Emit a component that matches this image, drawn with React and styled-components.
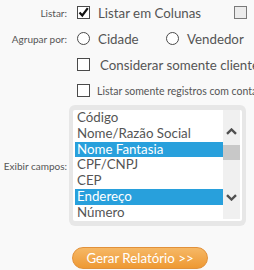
import React from "react";
import styled, {createGlobalStyle} from "styled-components";

const Global = createGlobalStyle`
  body {
    margin: 0;
    background: #f9f9f9;
    font-family: Lato, "Open Sans", sans-serif;
    color: #555;
  }
`

const Form = styled.div`
  display: grid;
  grid-template-columns: 69px 185px;
  width: 254px;
  height: 270px;
  overflow: hidden;
`

const Label = styled.div`
  font-size: 10px;
  text-align: right;
  padding-right: 2px;
  align-self: center;
  white-space: nowrap;
`

const Row = styled.div`
  display: flex;
  align-items: center;
  height: 25px;
  padding-left: 8px;
  white-space: nowrap;
`

const Option = styled.label`
  display: flex;
  align-items: center;
  gap: ${p => p.$gap || 8}px;
  flex: none;
  width: ${p => p.$w ? `${p.$w}px` : 'auto'};
  font-size: ${p => p.$small ? 10.5 : 13.3}px;
  color: #555;
`

const Box = styled.span`
  display: flex;
  align-items: center;
  justify-content: center;
  flex: none;
  width: 13px;
  height: 13px;
  box-sizing: border-box;
  border: 1px solid ${p => p.$disabled ? '#7a7a7a' : '#4a4a4a'};
  border-radius: ${p => p.$round ? '50%' : '0'};
  background: ${p => p.$disabled ? '#ececec' : '#fff'};
`

const Frame = styled.div`
  grid-column: 2;
  margin-top: 1px;
  width: 177px;
  height: 121px;
  box-sizing: border-box;
  padding: 5px 4px;
  background: #e7e7e7;
  border-radius: 6px;
`

const List = styled.div`
  display: flex;
  height: 111px;
  padding: 0 2px;
  background: #fff;
  border-radius: 2px;
`

const Items = styled.div`
  flex: 1;
  overflow: hidden;
`

const Item = styled.div`
  height: 15.75px;
  line-height: 15.75px;
  padding-left: 2px;
  font-size: 13.3px;
  white-space: nowrap;
  color: ${p => p.$selected ? '#fff' : '#555'};
  background: ${p => p.$selected ? '#28a0dc' : 'transparent'};
`

const Scrollbar = styled.div`
  display: flex;
  flex-direction: column;
  align-items: center;
  width: 17px;
  height: 109px;
  padding: 18px 0;
  box-sizing: border-box;
  background: #f0f0f0;
`

const Thumb = styled.div`
  width: 17px;
  height: 15px;
  margin-top: 10px;
  background: #c8c8c8;
`

const Spacer = styled.div`
  flex: 1;
`

const Button = styled.button`
  grid-column: 2;
  margin: 20px 0 0 3px;
  width: 136px;
  height: 22px;
  border: 1px solid #e2913a;
  border-radius: 11px;
  background: linear-gradient(#f6b866, #ee9933);
  color: #fff;
  font-family: Lato, "Open Sans", sans-serif;
  font-size: 13.3px;
  padding: 0;
`

const Check = () => (
    <svg width="11" height="11" viewBox="0 0 11 11">
        <path d="M1.5 5.5 L4.3 8.5 L9.8 1.2" fill="none" stroke="#111" strokeWidth="2.2"/>
    </svg>
)

const Chevron = ({down}) => (
    <svg width="11" height="7" viewBox="0 0 11 7">
        <path d={down ? "M1 1.2 L5.5 5.5 L10 1.2" : "M1 5.8 L5.5 1.5 L10 5.8"} fill="none" stroke="#505050"
              strokeWidth="2.4"/>
    </svg>
)

const fields = [
    ['Código'], ['Nome/Razão Social'], ['Nome Fantasia', true], ['CPF/CNPJ'],
    ['CEP'], ['Endereço', true], ['Número']
]

export default function App() {
    return (
        <Form>
            <Global/>
            <Label>Listar:</Label>
            <Row>
                <Option $w={157}><Box><Check/></Box>Listar em Colunas</Option>
                <Option><Box $disabled/></Option>
            </Row>

            <Label>Agrupar por:</Label>
            <Row>
                <Option $w={89}><Box $round/>Cidade</Option>
                <Option><Box $round/>Vendedor</Option>
            </Row>

            <span/>
            <Row>
                <Option $gap={10}><Box/>Considerar somente clientes ativos</Option>
            </Row>

            <span/>
            <Row>
                <Option $small $gap={7}><Box/>Listar somente registros com contato</Option>
            </Row>

            <Label>Exibir campos:</Label>
            <Frame>
                <List>
                    <Items>
                        {fields.map(([name, sel]) => <Item key={name} $selected={sel}>{name}</Item>)}
                    </Items>
                    <Scrollbar>
                        <Chevron/>
                        <Thumb/>
                        <Spacer/>
                        <Chevron down/>
                    </Scrollbar>
                </List>
            </Frame>

            <Button>Gerar Relatório &gt;&gt;</Button>
        </Form>
    )
}
